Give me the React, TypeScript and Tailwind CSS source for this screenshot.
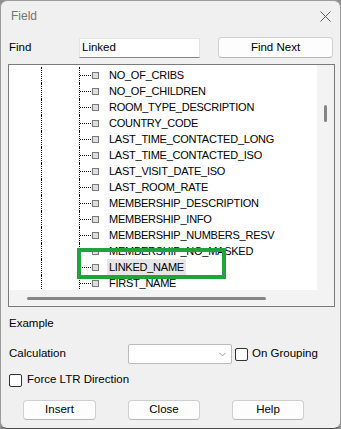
import { ChevronDown } from "lucide-react";

const fields = [
  "NO_OF_CRIBS",
  "NO_OF_CHILDREN",
  "ROOM_TYPE_DESCRIPTION",
  "COUNTRY_CODE",
  "LAST_TIME_CONTACTED_LONG",
  "LAST_TIME_CONTACTED_ISO",
  "LAST_VISIT_DATE_ISO",
  "LAST_ROOM_RATE",
  "MEMBERSHIP_DESCRIPTION",
  "MEMBERSHIP_INFO",
  "MEMBERSHIP_NUMBERS_RESV",
  "MEMBERSHIP_NO_MASKED",
  "LINKED_NAME",
  "FIRST_NAME",
];

function TreeRow({ name, selected }: { name: string; selected?: boolean }) {
  return (
    <div className="flex h-[16px] items-center">
      <div className="h-full w-[32px] shrink-0" />
      <div className="h-full w-[38px] shrink-0 border-l border-dotted border-black" />
      <div className="flex h-full w-[13px] shrink-0 items-center border-l border-dotted border-black">
        <div className="w-[11px] border-t border-dotted border-black" />
      </div>
      <div className="h-[7px] w-[7px] shrink-0 border border-[#7a7a7a] bg-[#dedede]" />
      <span
        className={`ml-[8px] whitespace-nowrap px-[2px] leading-[16px] ${selected ? "bg-[#e6e6e6]" : ""}`}
      >
        {name}
      </span>
    </div>
  );
}

function Checkbox() {
  return <div className="h-[13px] w-[13px] shrink-0 rounded-[2px] border border-[#333] bg-white" />;
}

function DlgButton({ label, className = "" }: { label: string; className?: string }) {
  return (
    <button
      type="button"
      className={`flex items-center justify-center rounded-[4px] border border-[#d0d0d0] border-b-[#b5b5b5] bg-[#fdfdfd] text-black ${className}`}
    >
      {label}
    </button>
  );
}

export default function App() {
  return (
    <div className="h-[429px] w-[341px] bg-[#8f8f8f] font-['Liberation_Sans',Arial,sans-serif] text-[11.5px] text-black">
      <div className="flex h-full flex-col rounded-[7px] border border-[#9b9b9b] border-b-[#4a4a4a] bg-[#f0f0f0]">
        {/* title bar */}
        <div className="flex h-[30px] shrink-0 items-center justify-between pl-[10px] pr-[9px]">
          <span className="text-[12px] text-[#747474]">Field</span>
          <svg width="11" height="11" viewBox="0 0 11 11" className="text-[#5c5c5c]">
            <path d="M0.5 0.5 L10.5 10.5 M10.5 0.5 L0.5 10.5" stroke="currentColor" strokeWidth="1" fill="none" />
          </svg>
        </div>

        {/* find row */}
        <div className="mt-[6px] flex h-[21px] shrink-0 items-center pl-[8px] pr-[7px]">
          <span className="w-[70px] shrink-0">Find</span>
          <div className="flex h-[20px] w-[121px] shrink-0 items-center border border-[#e3e3e3] border-b-[#868686] bg-white pl-[2px]">
            Linked
          </div>
          <DlgButton label="Find Next" className="ml-[18px] h-[21px] w-[115px]" />
        </div>

        {/* tree */}
        <div className="ml-[7px] mt-[6px] flex h-[243px] w-[327px] shrink-0 flex-col border border-[#7a7a7a]">
          <div className="flex h-[225px] shrink-0">
            <div className="relative h-full w-[308px] overflow-hidden bg-white pt-[2px] text-[11px] tracking-[-0.25px]">
              {fields.map((f) => (
                <TreeRow key={f} name={f} selected={f === "LINKED_NAME"} />
              ))}
              <div className="absolute left-[68px] top-[183px] h-[31px] w-[149px] border-[4px] border-[#1fa33a]" />
            </div>
            <div className="h-full w-[16px] bg-[#f3f3f3] pl-[7px] pt-[40px]">
              <div className="h-[17px] w-[3px] rounded-full bg-[#858585]" />
            </div>
          </div>
          <div className="flex flex-1 items-center bg-[#f3f3f3] pl-[18px]">
            <div className="h-[3px] w-[239px] rounded-full bg-[#858585]" />
          </div>
        </div>

        {/* example */}
        <div className="mt-[9px] pl-[8px] leading-[14px]">Example</div>

        {/* calculation */}
        <div className="mt-[14px] flex h-[20px] items-center pl-[8px]">
          <span className="w-[119px] shrink-0">Calculation</span>
          <div className="flex h-[20px] w-[104px] shrink-0 items-center justify-end rounded-[2px] border border-[#bcbcbc] bg-white pr-[3px]">
            <ChevronDown size={11} strokeWidth={1.25} className="text-[#555]" />
          </div>
          <div className="ml-[3px]">
            <Checkbox />
          </div>
          <span className="ml-[4px]">On Grouping</span>
        </div>

        {/* force ltr */}
        <div className="mt-[9px] flex h-[14px] items-center pl-[8px]">
          <Checkbox />
          <span className="ml-[5px]">Force LTR Direction</span>
        </div>

        {/* buttons */}
        <div className="mt-[13px] flex gap-[32px] pl-[22px]">
          <DlgButton label="Insert" className="h-[20px] w-[73px]" />
          <DlgButton label="Close" className="h-[20px] w-[72px]" />
          <DlgButton label="Help" className="h-[20px] w-[72px]" />
        </div>
      </div>
    </div>
  );
}
